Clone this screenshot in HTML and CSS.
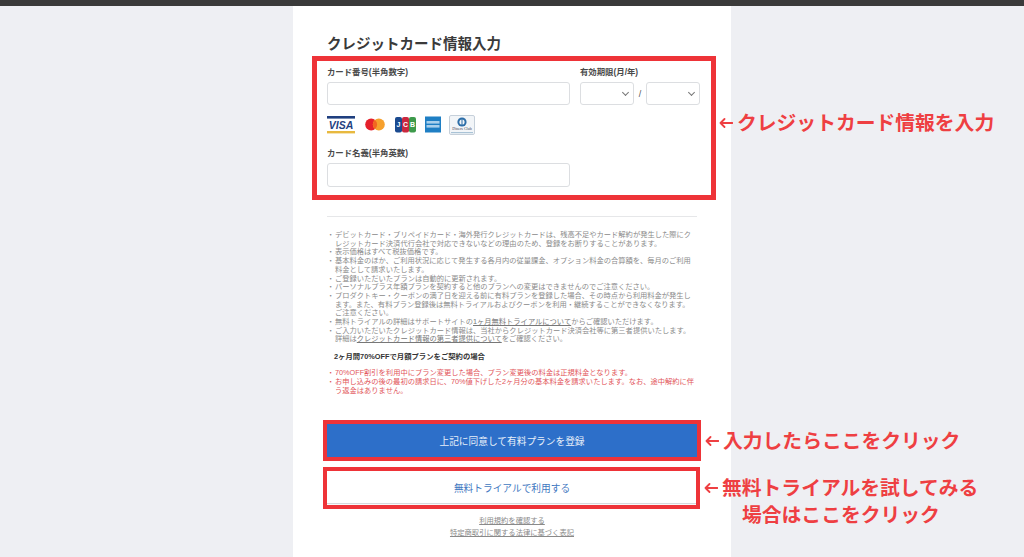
FILE: index.html
```html
<!DOCTYPE html>
<html lang="ja">
<head>
    <meta charset="UTF-8">
    <meta name="viewport" content="width=device-width, initial-scale=1.0">
    <title>クレジットカード情報入力</title>
    <link rel="stylesheet" href="styles.css">
</head>
<body>
    <div class="top-bar"></div>
    <div class="sheet">
        <h1 class="section-title">クレジットカード情報入力</h1>

        <form class="card-form">
            <div class="form-row">
                <div class="form-group">
                    <label for="cardNumber">カード番号(半角数字)</label>
                    <input type="text" id="cardNumber" class="text-input">
                </div>
                <div class="form-group">
                    <label for="month">有効期限(月/年)</label>
                    <div class="expiry">
                        <div class="select-wrap"><select id="month" class="expiry-select"><option></option></select></div>
                        <span class="slash">/</span>
                        <div class="select-wrap"><select id="year" class="expiry-select" aria-label="年"><option></option></select></div>
                    </div>
                </div>
            </div>

            <div class="card-logos">
                <!-- Visa -->
                <svg width="28" height="19" viewBox="0 0 28 19">
                    <rect x="0" y="1" width="28" height="2.6" fill="#1f3f7f"/>
                    <rect x="0" y="16" width="28" height="2.4" fill="#e8b93f"/>
                    <text x="14" y="13.8" class="visa-text" text-anchor="middle">VISA</text>
                </svg>
                <!-- Mastercard -->
                <svg class="logo-mc" width="20" height="19" viewBox="0 0 20 19">
                    <circle cx="6.2" cy="9.5" r="6" fill="#e5202b"/>
                    <circle cx="13.8" cy="9.5" r="6" fill="#f6a02d"/>
                    <path d="M10 4.9a6 6 0 0 1 0 9.2a6 6 0 0 1 0-9.2z" fill="#f26522"/>
                </svg>
                <!-- JCB -->
                <svg class="logo-jcb" width="21" height="19" viewBox="0 0 21 19">
                    <rect x="0" y="2" width="7" height="15.5" rx="2" fill="#1b4a8f"/>
                    <rect x="7" y="2" width="7" height="15.5" rx="2" fill="#c9283e"/>
                    <rect x="14" y="2" width="7" height="15.5" rx="2" fill="#3d9a4b"/>
                    <text x="3.5" y="12.4" class="jcb-text" text-anchor="middle">J</text>
                    <text x="10.5" y="12.4" class="jcb-text" text-anchor="middle">C</text>
                    <text x="17.5" y="12.4" class="jcb-text" text-anchor="middle">B</text>
                </svg>
                <!-- Amex -->
                <svg class="logo-amex" width="16" height="19" viewBox="0 0 16 19">
                    <rect x="0" y="1.5" width="16" height="16" fill="#1f7fc4"/>
                    <rect x="1.5" y="6" width="13" height="2.6" fill="#a9d0ec"/>
                    <rect x="1.5" y="10" width="13" height="2.6" fill="#a9d0ec"/>
                </svg>
                <!-- Diners Club -->
                <svg class="logo-diners" width="26" height="20" viewBox="0 0 26 20">
                    <rect x="0.5" y="0.5" width="25" height="19" rx="1.5" fill="#f2f5f8" stroke="#c6d0da"/>
                    <circle cx="13" cy="7" r="4.6" fill="#2d6ea8"/>
                    <circle cx="13" cy="7" r="2.6" fill="#f2f5f8"/>
                    <rect x="12.5" y="4" width="1" height="6" fill="#2d6ea8"/>
                    <text x="13" y="15.4" class="diners-text" text-anchor="middle">Diners Club</text>
                    <rect x="2" y="17" width="22" height="1.2" fill="#a9c3d6"/>
                </svg>
            </div>

            <div class="form-group">
                <label for="cardName">カード名義(半角英数)</label>
                <input type="text" id="cardName" class="text-input name-input">
            </div>
        </form>

        <hr class="divider">

        <ul class="notes">
            <li>デビットカード・プリペイドカード・海外発行クレジットカードは、残高不足やカード解約が発生した際にク<br>レジットカード決済代行会社で対応できないなどの理由のため、登録をお断りすることがあります。</li>
            <li>表示価格はすべて税抜価格です。</li>
            <li>基本料金のほか、ご利用状況に応じて発生する各月内の従量課金、オプション料金の合算額を、毎月のご利用<br>料金として請求いたします。</li>
            <li>ご登録いただいたプランは自動的に更新されます。</li>
            <li>パーソナルプラス年額プランを契約すると他のプランへの変更はできませんのでご注意ください。</li>
            <li>プロダクトキー・クーポンの満了日を迎える前に有料プランを登録した場合、その時点から利用料金が発生し<br>ます。また、有料プラン登録後は無料トライアルおよびクーポンを利用・継続することができなくなります。<br>ご注意ください。</li>
            <li>無料トライアルの詳細はサポートサイトの<a href="#">1ヶ月無料トライアルについて</a>からご確認いただけます。</li>
            <li>ご入力いただいたクレジットカード情報は、当社からクレジットカード決済会社等に第三者提供いたします。<br>詳細は<a href="#">クレジットカード情報の第三者提供について</a>をご確認ください。</li>
        </ul>

        <h2 class="notes-title">2ヶ月間70%OFFで月額プランをご契約の場合</h2>

        <ul class="notes notes-red">
            <li>70%OFF割引を利用中にプラン変更した場合、プラン変更後の料金は正規料金となります。</li>
            <li>お申し込みの後の最初の請求日に、70%値下げした2ヶ月分の基本料金を請求いたします。なお、途中解約に伴<br>う返金はありません。</li>
        </ul>

        <button type="button" class="btn btn-primary">上記に同意して有料プランを登録</button>
        <button type="button" class="btn btn-trial">無料トライアルで利用する</button>

        <div class="footer-links">
            <a href="#">利用規約を確認する</a>
            <a href="#">特定商取引に関する法律に基づく表記</a>
        </div>
    </div>

    <!-- Red markup drawn on top of the screenshot -->
    <div class="mark mark-card"></div>
    <div class="mark mark-primary"></div>
    <div class="mark mark-trial"></div>
    <div class="callout callout-card"><svg class="arrow" viewBox="0 0 14 10"><path d="M13.5 5H1.5M5.5 1L1.5 5l4 4"/></svg>クレジットカード情報を入力</div>
    <div class="callout callout-primary"><svg class="arrow" viewBox="0 0 14 10"><path d="M13.5 5H1.5M5.5 1L1.5 5l4 4"/></svg>入力したらここをクリック</div>
    <div class="callout callout-trial"><svg class="arrow" viewBox="0 0 14 10"><path d="M13.5 5H1.5M5.5 1L1.5 5l4 4"/></svg>無料トライアルを試してみる<br><span class="callout-second">場合はここをクリック</span></div>
</body>
</html>
```

FILE: styles.css
```css
* {
    margin: 0;
    padding: 0;
    box-sizing: border-box;
    font-family: "Liberation Sans", "Noto Sans CJK JP", sans-serif;
}
html, body {
    height: 557px;
    overflow: hidden;
}
body {
    background-color: #eeeff3;
    position: relative;
}
.top-bar {
    height: 6px;
    background-color: #3a3a3a;
}
.sheet {
    width: 438px;
    height: 551px;
    margin: 0 auto;
    padding: 30px 34px 0;
    background-color: #fff;
}
.section-title {
    font-size: 14.5px;
    line-height: 16px;
    font-weight: bold;
    color: #3a3a3a;
    margin-bottom: 15px;
}
.form-row {
    display: grid;
    grid-template-columns: 243px 120px;
    gap: 10px;
}
.form-group label {
    display: block;
    font-size: 8.4px;
    line-height: 10px;
    font-weight: bold;
    color: #4a4a4a;
    margin-bottom: 5px;
}
.text-input {
    display: block;
    width: 243px;
    height: 23px;
    border: 1px solid #dcdee1;
    border-radius: 3px;
    background-color: #fff;
}
.name-input {
    height: 24px;
}
.expiry {
    display: flex;
    align-items: center;
    justify-content: space-between;
}
.select-wrap {
    position: relative;
    width: 54px;
    height: 23px;
}
.select-wrap::after {
    content: "";
    position: absolute;
    top: 8px;
    right: 6px;
    width: 4px;
    height: 4px;
    border-right: 1px solid #777;
    border-bottom: 1px solid #777;
    transform: rotate(45deg);
}
.expiry-select {
    display: block;
    width: 54px;
    height: 23px;
    border: 1px solid #dcdee1;
    border-radius: 3px;
    background-color: #fff;
    appearance: none;
}
.slash {
    font-size: 9px;
    color: #555;
}
.card-logos {
    display: flex;
    align-items: center;
    height: 19px;
    margin-top: 10px;
    margin-bottom: 14px;
}
.logo-mc {
    margin-left: 10px;
}
.logo-jcb {
    margin-left: 10px;
}
.logo-amex {
    margin-left: 9px;
}
.logo-diners {
    margin-left: 8px;
}
.visa-text {
    font-size: 10.5px;
    font-weight: bold;
    font-style: italic;
    fill: #1f3f7f;
}
.jcb-text {
    font-size: 7px;
    font-weight: bold;
    fill: #fff;
}
.diners-text {
    font-family: "Liberation Serif", serif;
    font-size: 4px;
    fill: #445;
}
.divider {
    border: none;
    border-top: 1px solid #e6e7e9;
    margin-top: 29px;
    margin-bottom: 14px;
}
.notes {
    list-style: none;
    font-size: 7.28px;
    line-height: 8.7px;
    color: #8a8a8a;
}
.notes li {
    padding-left: 8px;
    position: relative;
}
.notes li::before {
    content: "・";
    position: absolute;
    left: 0;
}
.notes a {
    color: #777;
    text-decoration: underline;
}
.notes-title {
    font-size: 7.35px;
    line-height: 8px;
    font-weight: bold;
    color: #333;
    padding-left: 7px;
    margin-top: 9px;
    margin-bottom: 8px;
}
.notes-red {
    color: #e2555a;
}
.btn {
    display: block;
    width: 370px;
    border: none;
    font-size: 9.7px;
    cursor: pointer;
}
.btn-primary {
    height: 33px;
    margin-top: 29px;
    background-color: #2d6fc9;
    color: #e8f0fa;
}
.btn-trial {
    height: 31px;
    margin-top: 15px;
    background-color: #fff;
    color: #3f78bf;
    box-shadow: 0 1px 1px #d5d8dd;
}
.footer-links {
    margin-top: 12px;
    text-align: center;
}
.footer-links a {
    display: block;
    font-size: 7.3px;
    line-height: 12px;
    color: #8a8a8a;
}
.mark {
    position: absolute;
    border: 4px solid #ee3338;
}
.mark-card {
    left: 312px;
    top: 56px;
    width: 404px;
    height: 144px;
    border-width: 5px;
}
.mark-primary {
    left: 323px;
    top: 420px;
    width: 378px;
    height: 41px;
}
.mark-trial {
    left: 323px;
    top: 467px;
    width: 377px;
    height: 42px;
}
.callout {
    position: absolute;
    font-size: 19.8px;
    line-height: 27px;
    font-weight: bold;
    color: #ee3f42;
    white-space: nowrap;
}
.arrow {
    display: inline-block;
    width: 14px;
    height: 10px;
    margin-right: 4px;
    vertical-align: 2px;
    fill: none;
    stroke: #ee3f42;
    stroke-width: 1.8;
    stroke-linecap: round;
    stroke-linejoin: round;
}
.callout-card {
    left: 719px;
    top: 110px;
}
.callout-primary {
    left: 705px;
    top: 428px;
}
.callout-trial {
    left: 704px;
    top: 475px;
}
.callout-second {
    margin-left: 38px;
}
```
